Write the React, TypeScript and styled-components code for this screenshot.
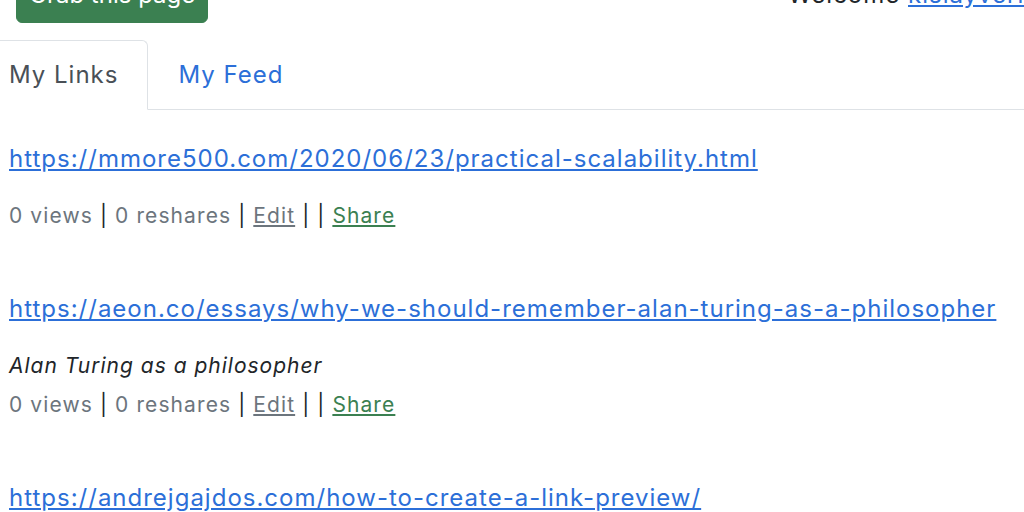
import React from "react";
import styled, { createGlobalStyle } from "styled-components";

const GlobalStyle = createGlobalStyle`
  html, body {
    margin: 0;
    padding: 0;
    background: #ffffff;
    overflow: hidden;
  }
  body {
    font-family: Inter, "Liberation Sans", Arial, sans-serif;
    color: #212529;
    letter-spacing: 1px;
  }
`;

const S = {
  Page: styled.div`
    width: 1054px;
    padding: 0 0 0 9px;
    box-sizing: border-box;
  `,
  Header: styled.header`
    display: flex;
    align-items: baseline;
    justify-content: space-between;
    margin-top: -33px;
    padding-left: 7px;
  `,
  GrabButton: styled.button`
    font-family: inherit;
    font-size: 24px;
    line-height: 36px;
    letter-spacing: 0;
    color: #ffffff;
    background: #3b8051;
    border: 1px solid #3b8051;
    border-radius: 6px;
    padding: 9px 12px;
    cursor: pointer;
  `,
  Welcome: styled.div`
    font-size: 24px;
    line-height: 36px;
    color: #212529;
  `,
  UserLink: styled.a`
    color: #2c6fd8;
    text-decoration: underline;
  `,
  Tabs: styled.ul`
    display: flex;
    list-style: none;
    margin: 17px 0 0 -30px;
    padding: 0;
    border-bottom: 1px solid #dee2e6;
  `,
  Tab: styled.li<{ active?: boolean }>`
    font-size: 24px;
    line-height: 36px;
    padding: 16px 29px;
    margin-bottom: -1px;
    border: 1px solid ${({ active }) => (active ? "#dee2e6" : "transparent")};
    border-bottom-color: ${({ active }) => (active ? "#ffffff" : "transparent")};
    border-radius: 6px 6px 0 0;
    color: ${({ active }) => (active ? "#495057" : "#2c6fd8")};
    background: ${({ active }) => (active ? "#ffffff" : "transparent")};
  `,
  List: styled.div`
    padding-top: 31px;
  `,
  Item: styled.div`
    margin-bottom: 59px;
  `,
  Url: styled.a`
    display: block;
    font-size: 24px;
    line-height: 36px;
    color: #2c6fd8;
    text-decoration: underline;
    margin-bottom: 23px;
    white-space: nowrap;
  `,
  Description: styled.div`
    font-size: 21px;
    line-height: 32px;
    font-style: italic;
    color: #212529;
    margin-bottom: 7px;
  `,
  Meta: styled.div`
    font-size: 21px;
    line-height: 32px;
    letter-spacing: 1.1px;
    color: #6c757d;
  `,
  Sep: styled.span`
    color: #212529;
  `,
  MetaLink: styled.a<{ tone: "muted" | "success" }>`
    color: ${({ tone }) => (tone === "success" ? "#3b8051" : "#6c757d")};
    text-decoration: underline;
  `,
};

type LinkItem = {
  url: string;
  description?: string;
  views: number;
  reshares: number;
};

const LINKS: LinkItem[] = [
  {
    url: "https://mmore500.com/2020/06/23/practical-scalability.html",
    views: 0,
    reshares: 0,
  },
  {
    url: "https://aeon.co/essays/why-we-should-remember-alan-turing-as-a-philosopher",
    description: "Alan Turing as a philosopher",
    views: 0,
    reshares: 0,
  },
  {
    url: "https://andrejgajdos.com/how-to-create-a-link-preview/",
    views: 0,
    reshares: 0,
  },
];

const App: React.FC = () => {
  return (
    <>
      <GlobalStyle />
      <S.Page>
        <S.Header>
          <S.GrabButton type="button">Grab this page</S.GrabButton>
          <S.Welcome>
            Welcome <S.UserLink href="#">kislayverma</S.UserLink>
          </S.Welcome>
        </S.Header>
        <S.Tabs>
          <S.Tab active>My Links</S.Tab>
          <S.Tab>My Feed</S.Tab>
        </S.Tabs>
        <S.List>
          {LINKS.map((link) => (
            <S.Item key={link.url}>
              <S.Url href={link.url}>{link.url}</S.Url>
              {link.description && (
                <S.Description>{link.description}</S.Description>
              )}
              <S.Meta>
                {link.views} views <S.Sep>|</S.Sep> {link.reshares} reshares{" "}
                <S.Sep>|</S.Sep> <S.MetaLink tone="muted" href="#">Edit</S.MetaLink>{" "}
                <S.Sep>|</S.Sep> <S.Sep>|</S.Sep>{" "}
                <S.MetaLink tone="success" href="#">Share</S.MetaLink>
              </S.Meta>
            </S.Item>
          ))}
        </S.List>
      </S.Page>
    </>
  );
};

export default App;
